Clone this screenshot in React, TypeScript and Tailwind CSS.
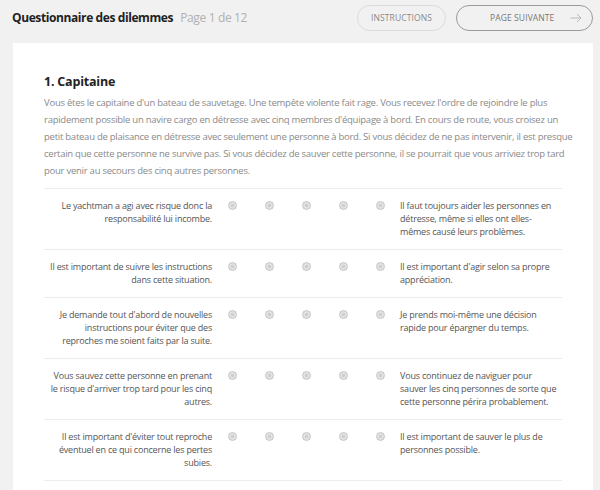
import React from 'react';

const INTRO = [
  "Vous êtes le capitaine d'un bateau de sauvetage. Une tempête violente fait rage. Vous recevez l'ordre de rejoindre le plus",
  "rapidement possible un navire cargo en détresse avec cinq membres d'équipage à bord. En cours de route, vous croisez un",
  'petit bateau de plaisance en détresse avec seulement une personne à bord. Si vous décidez de ne pas intervenir, il est presque',
  'certain que cette personne ne survive pas. Si vous décidez de sauver cette personne, il se pourrait que vous arriviez trop tard',
  'pour venir au secours des cinq autres personnes.',
];

const ITEMS = [
  {
    left: ['Le yachtman a agi avec risque donc la', 'responsabilité lui incombe.'],
    right: ['Il faut toujours aider les personnes en', 'détresse, même si elles ont elles-', 'mêmes causé leurs problèmes.'],
  },
  {
    left: ['Il est important de suivre les instructions', 'dans cette situation.'],
    right: ["Il est important d'agir selon sa propre", 'appréciation.'],
  },
  {
    left: ["Je demande tout d'abord de nouvelles", 'instructions pour éviter que des', 'reproches me soient faits par la suite.'],
    right: ['Je prends moi-même une décision', 'rapide pour épargner du temps.'],
  },
  {
    left: ['Vous sauvez cette personne en prenant', "le risque d'arriver trop tard pour les cinq", 'autres.'],
    right: ['Vous continuez de naviguer pour', 'sauver les cinq personnes de sorte que', 'cette personne périra probablement.'],
  },
  {
    left: ["Il est important d'éviter tout reproche", 'éventuel en ce qui concerne les pertes', 'subies.'],
    right: ['Il est important de sauver le plus de', 'personnes possible.'],
  },
];

const Radio = () => (
  <span className="block w-[9px] h-[9px] rounded-full border border-[#c6c6c6] bg-[radial-gradient(circle,#cfcfcf_0%,#cfcfcf_30%,#e6e6e6_45%,#d4d4d4_100%)]" />
);

const Lines = ({ lines }: { lines: string[] }) => (
  <>
    {lines.map((l, i) => (
      <span key={i} className="block whitespace-nowrap">
        {l}
      </span>
    ))}
  </>
);

export default function App() {
  return (
    <div className="min-h-[490px] bg-[#f1f1f1] font-['Open_Sans',sans-serif] overflow-hidden">
      {/* Header */}
      <div className="flex items-center h-[36px] pl-[12px] pr-[7px]">
        <h1 className="text-[12px] font-bold text-[#222] tracking-[-0.4px]">Questionnaire des dilemmes</h1>
        <span className="ml-[7px] text-[12px] text-[#b0b0b0] tracking-[-0.35px]">Page 1 de 12</span>
        <div className="ml-auto flex gap-[10px]">
          <button className="h-[26px] w-[89px] rounded-full border border-[#dcdcdc] text-[8.5px] text-[#8a8a8a] tracking-[0.1px]">
            INSTRUCTIONS
          </button>
          <button className="h-[26px] w-[137px] rounded-full border border-[#9a9a9a] text-[8.5px] text-[#777] tracking-[0.1px] flex items-center pl-[33px] pr-[10px]">
            <span>PAGE SUIVANTE</span>
            <svg className="ml-auto" width="12" height="10" viewBox="0 0 12 10" fill="none" stroke="#b8b8b8" strokeWidth="1">
              <path d="M0.5 5h10.5M7 1l4 4-4 4" />
            </svg>
          </button>
        </div>
      </div>

      {/* Card */}
      <div className="mt-[7px] ml-[13px] mr-[7px] bg-white pl-[31px] pr-[31px] pt-[30px] pb-[20px]">
        <h2 className="text-[12.5px] font-bold text-[#222] leading-[18px] tracking-[-0.2px]">1. Capitaine</h2>
        <p className="mt-[3px] text-[9.5px] leading-[17px] text-[#8a8a8a] tracking-[-0.25px]">
          <Lines lines={INTRO} />
        </p>

        <div className="mt-[9px] border-t border-[#ececec]">
          {ITEMS.map((item, i) => (
            <div
              key={i}
              className="grid grid-cols-[170px_repeat(5,37px)_1fr] border-b border-[#ececec] pt-[10px] pb-[11px] text-[9px] leading-[13px] text-[#555] tracking-[-0.2px]"
            >
              <div className="text-right pr-[2px]">
                <Lines lines={item.left} />
              </div>
              {[0, 1, 2, 3, 4].map((r) => (
                <div key={r} className="flex justify-center pt-[2px]">
                  <Radio />
                </div>
              ))}
              <div className="pl-[1px]">
                <Lines lines={item.right} />
              </div>
            </div>
          ))}
        </div>
      </div>
    </div>
  );
}
